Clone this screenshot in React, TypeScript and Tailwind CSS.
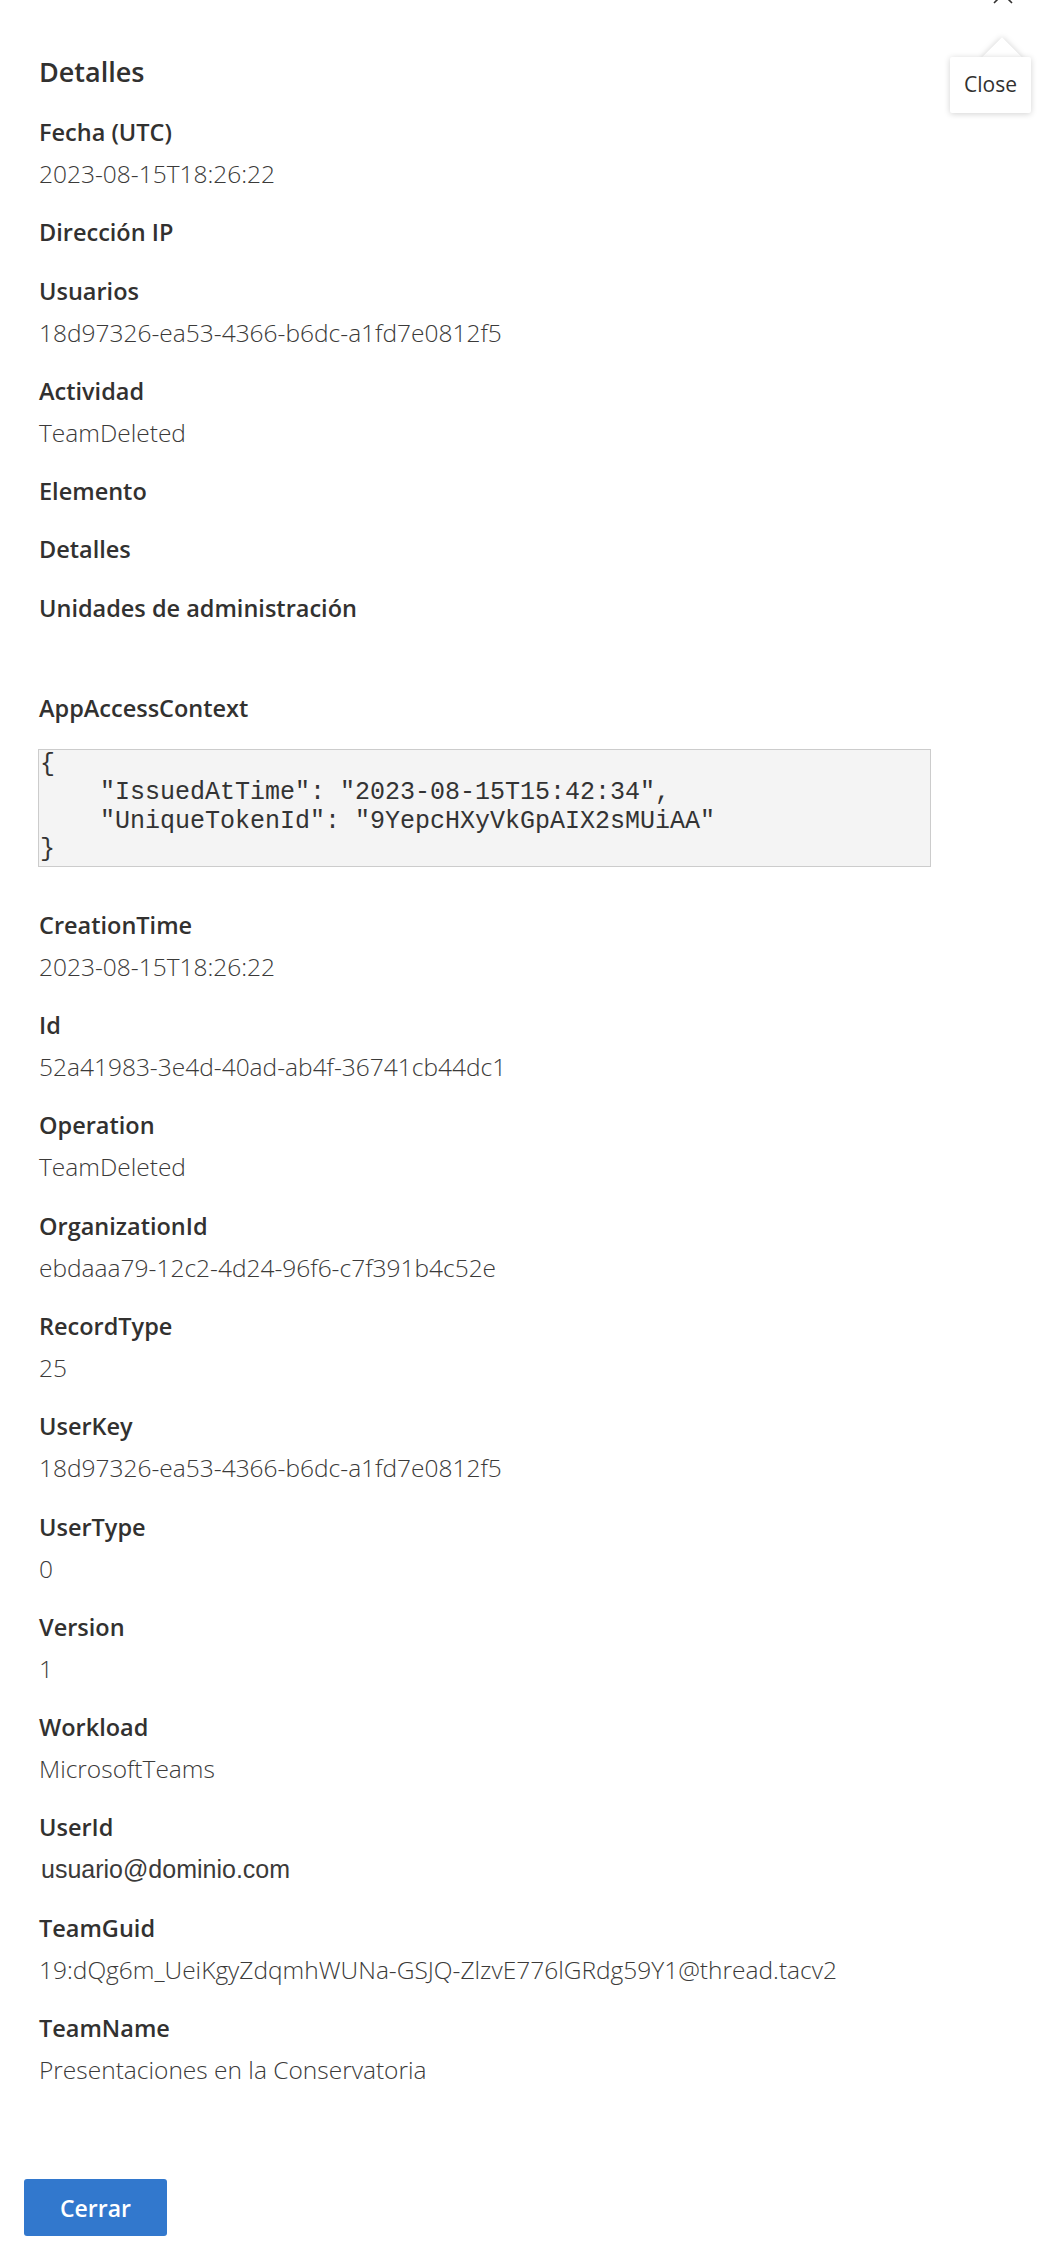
import React from "react"

const font = { fontFamily: '"Open Sans", "Noto Sans", sans-serif' }

type Field = { label: string; value?: string; alt?: boolean }

const topFields: Field[] = [
  { label: "Fecha (UTC)", value: "2023-08-15T18:26:22" },
  { label: "Dirección IP" },
  { label: "Usuarios", value: "18d97326-ea53-4366-b6dc-a1fd7e0812f5" },
  { label: "Actividad", value: "TeamDeleted" },
  { label: "Elemento" },
  { label: "Detalles" },
]

const auditFields: Field[] = [
  { label: "CreationTime", value: "2023-08-15T18:26:22" },
  { label: "Id", value: "52a41983-3e4d-40ad-ab4f-36741cb44dc1" },
  { label: "Operation", value: "TeamDeleted" },
  { label: "OrganizationId", value: "ebdaaa79-12c2-4d24-96f6-c7f391b4c52e" },
  { label: "RecordType", value: "25" },
  { label: "UserKey", value: "18d97326-ea53-4366-b6dc-a1fd7e0812f5" },
  { label: "UserType", value: "0" },
  { label: "Version", value: "1" },
  { label: "Workload", value: "MicrosoftTeams" },
  { label: "UserId", value: "usuario@dominio.com", alt: true },
  { label: "TeamGuid", value: "19:dQg6m_UeiKgyZdqmhWUNa-GSJQ-ZlzvE776lGRdg59Y1@thread.tacv2" },
  { label: "TeamName", value: "Presentaciones en la Conservatoria" },
]

function FieldRow({ f }: { f: Field }) {
  return (
    <div className="mb-[16.3px]">
      <div className="text-[23.5px] leading-[42px] font-semibold text-[#323130]">{f.label}</div>
      {f.value && (
        <div
          className={
            f.alt
              ? "pl-[2px] text-[25px] leading-[42px] text-[#3b3a39]"
              : "text-[24.5px] leading-[42px] font-light text-[#3b3a39]"
          }
          style={f.alt ? { fontFamily: '"Liberation Sans", Arial, sans-serif' } : undefined}
        >
          {f.value}
        </div>
      )}
    </div>
  )
}

export default function App() {
  return (
    <div className="relative w-[1038px] min-h-[2256px] bg-white overflow-hidden" style={font}>
      {/* close icon, scrolled mostly out of view */}
      <svg className="absolute left-[993px] top-[-16px] w-[20px] h-[20px]" viewBox="0 0 20 20" fill="none" stroke="#323130" strokeWidth={1.6}>
        <path d="M1 1l18 18M19 1L1 19" />
      </svg>

      {/* Close tooltip */}
      <div className="absolute left-[950px] top-[37px]">
        <div className="absolute left-[38px] top-[6px] w-[28px] h-[28px] rotate-45 bg-white shadow-[0_0_6px_rgba(0,0,0,0.18)]" />
        <div className="relative mt-[20px] w-[81px] h-[56px] rounded-[2px] bg-white shadow-[0_1px_6px_rgba(0,0,0,0.18)] flex items-center justify-center text-[21px] text-[#323130]">
          Close
        </div>
      </div>

      <div className="pl-[39px] pt-[52px]">
        <h2 className="text-[27px] leading-[40px] font-semibold text-[#323130] mb-[19px]">Detalles</h2>

        {topFields.map((f) => (
          <FieldRow key={f.label} f={f} />
        ))}

        <div className="mb-[16px]">
          <div className="text-[23.5px] leading-[42px] font-semibold text-[#323130]">Unidades de administración</div>
          <div className="h-[42px]" />
        </div>

        <div className="text-[23.5px] leading-[42px] font-semibold text-[#323130]">AppAccessContext</div>
        <pre
          className="mt-[20px] -ml-[1px] w-[893px] border border-[#cccccc] bg-[#f4f4f4] pl-[1px] py-[1px] text-[25px] leading-[28.5px] text-[#333333]"
          style={{ fontFamily: '"Liberation Mono", "Courier New", monospace' }}
        >
{`{
    "IssuedAtTime": "2023-08-15T15:42:34",
    "UniqueTokenId": "9YepcHXyVkGpAIX2sMUiAA"
}`}
        </pre>

        <div className="mt-[37px]">
          {auditFields.map((f) => (
            <FieldRow key={f.label} f={f} />
          ))}
        </div>
      </div>

      <div className="pl-[24px] pt-[72px] pb-[19px]">
        <button className="w-[143px] h-[57px] rounded-[3px] bg-[#3278cd] text-white text-[23px] font-semibold">
          Cerrar
        </button>
      </div>
    </div>
  )
}
